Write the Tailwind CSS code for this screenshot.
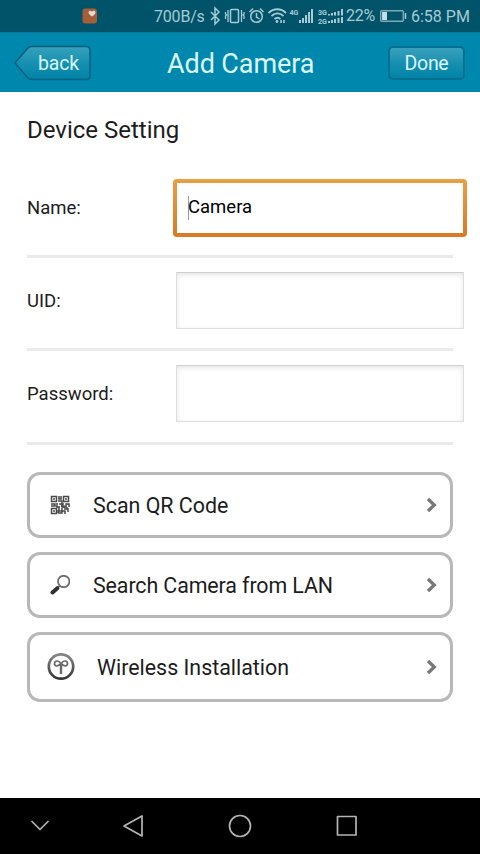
<!DOCTYPE html>
<html lang="en">
<head>
<meta charset="utf-8">
<title>Add Camera</title>
<script src="https://cdn.jsdelivr.net/npm/@tailwindcss/browser@4"></script>
</head>
<body class="w-[480px] h-[854px] overflow-hidden bg-white text-[#1c1c1c] font-[Roboto,sans-serif] flex flex-col">
<div class="h-8 shrink-0 bg-[#005369] text-[#a5cbd5] flex items-center text-[16px] leading-8 whitespace-nowrap">
  <svg class="ml-[82px] w-4 h-4 shrink-0" viewBox="0 0 16 16"><rect x=".5" y=".5" width="14.5" height="15" rx="3" fill="#a45f38"/><path d="M10 8.500C8 7 6.500 6 6.500 4.500c0-2 2.500-2.300 3.500-.7 1-1.600 3.500-1.300 3.500.7 0 1.500-1.500 2.500-3.500 4z" fill="#ead9d2"/></svg>
  <span class="ml-[56px] w-[55px] shrink-0 pt-px tracking-[-.2px]">700B/s</span>
  <svg class="w-[136px] h-8 shrink-0" viewBox="209 0 136 32" fill="none" stroke="#a5cbd5" stroke-width="1.500">
    <path d="M211 12l8 8-4 4V8l4 4-8 8"/>
    <rect x="230.500" y="9.500" width="8" height="13" rx="1"/><path d="M228 10v12M241.500 10v12M225.500 12v2l1 1-1 1v3M244 12v2l-1 1 1 1v3" stroke-width="1.300"/>
    <circle cx="256.500" cy="16.500" r="5.800"/><path d="M256.500 13v4l3 2M249.500 12l3.500-3.500M263.500 12l-3.500-3.500"/>
    <path d="M268.500 13c5-5 12.500-5 17.500 0M271.500 16c3.500-3.500 8.500-3.500 12 0M274.500 19c2-1.700 4-1.700 6 0" stroke-width="1.800"/><circle cx="277" cy="21.500" r="1.400" fill="#a5cbd5" stroke="none"/><path d="M281 20v3M284 20v3" stroke-width="1.600"/>
    <path d="M300 20v3M303 18v5M306 15v8M309 12v11M312 9v14" stroke-width="2"/>
    <path d="M329 14v1.500M332 13v2.500M335 12v3.500M338.500 11v4.500M342 9v6.500M329 21v2M332 20v3M335 19v4M338.500 18v5M342 17v6" stroke-width="2"/>
    <g fill="#a5cbd5" stroke="none" font-family="Roboto, sans-serif" font-weight="700" font-size="7"><text x="289.500" y="15" font-size="8" textLength="9" lengthAdjust="spacingAndGlyphs">4G</text><text x="318" y="14.500" textLength="9" lengthAdjust="spacingAndGlyphs">3G</text><text x="318" y="24" textLength="9" lengthAdjust="spacingAndGlyphs">2G</text></g>
  </svg>
  <span class="ml-[1px] w-[33px] shrink-0 text-[16px] tracking-[-.3px]">22%</span>
  <svg class="w-7 h-4 shrink-0" viewBox="0 0 28 16"><rect x="1.700" y="2.700" width="22.600" height="10.600" rx="1" fill="none" stroke="#7eacb8" stroke-width="1.400"/><path d="M3 4h5v8H3z" fill="#c1dfe5"/><path d="M26.500 5v6" stroke="#a5cbd5" stroke-width="1.500"/></svg>
  <span class="ml-[4px] pt-px">6:58 PM</span>
</div>
<header class="h-[60px] shrink-0 bg-[#0087ad] border-t border-[#08799b] flex items-center text-[#d9f7fc]">
  <button class="relative ml-[14px] w-[77px] h-[36px] flex items-center justify-center pl-3 mt-px">
    <svg class="absolute inset-0 w-[77px] h-[36px]" viewBox="0 0 77 36"><defs><linearGradient id="b" x2="0" y2="1"><stop stop-color="#38a1bc"/><stop offset=".5" stop-color="#1790b1"/><stop offset="1" stop-color="#0083a7"/></linearGradient></defs><path d="M1 18L13.500 3.500Q15 1.500 18 1.500h54q4 0 4 4v25q0 4-4 4H18q-3 0-4.500-2z" fill="url(#b)" stroke="#04617f" stroke-width="1.500"/></svg>
    <span class="relative text-[19.500px] leading-none tracking-[-.2px] pt-px">back</span>
  </button>
  <h1 class="ml-[76px] w-[150px] text-[27px] tracking-[-.1px] leading-none whitespace-nowrap mt-[3px]">Add Camera</h1>
  <button class="ml-[71px] mt-px w-[77px] h-[34px] rounded-[5px] border-2 border-[#04708f] bg-linear-to-b from-[#38a1bc] via-[#1790b1] to-[#0083a7] text-[19.500px] tracking-[-.3px] leading-none pt-px">Done</button>
</header>
<main class="flex-1 flex flex-col pl-[27px] pr-[13px]">
  <h2 class="h-[75px] flex items-center text-[24px]">Device Setting</h2>
  <div class="h-[82px] flex items-center">
    <label class="w-[146px] text-[18.500px] mt-px">Name:</label>
    <div class="w-[294px] h-[58px] -mt-px rounded-[4px] bg-linear-to-b from-[#e8a043] to-[#d97a25] p-[4px]"><div class="h-full bg-white pl-[11px] flex items-center text-[18.500px] text-black"><span class="w-px h-6 bg-[#8aa0a8] -mr-px"></span><span class="pt-px">Camera</span></div></div>
  </div>
  <div class="mt-[6px] h-[3px] w-[426px] bg-[#ebebeb]"></div>
  <div class="h-[90px] flex items-center pb-[6px]">
    <label class="w-[149px] text-[18.500px] pt-[3px]">UID:</label>
    <div class="w-[288px] h-[57px] border border-[#dedede] border-t-[#cfcfcf] shadow-[inset_0_2px_5px_#e5e5e5]"></div>
  </div>
  <div class="h-[3px] w-[426px] bg-[#ebebeb]"></div>
  <div class="h-[91px] flex items-center pb-[6px]">
    <label class="w-[149px] text-[18.500px] pt-[3px]">Password:</label>
    <div class="w-[288px] h-[57px] border border-[#dedede] border-t-[#cfcfcf] shadow-[inset_0_2px_5px_#e5e5e5]"></div>
  </div>
  <div class="h-[3px] w-[426px] bg-[#ebebeb]"></div>
  <div class="mt-[27px] w-[426px] flex flex-col gap-[14px] text-[21.400px]">
    <button class="h-[66px] border-3 border-[#b8b8b8] rounded-[13px] flex items-center text-left">
      <svg class="ml-[20px] w-5 h-5" viewBox="0 0 20 20" fill="none" stroke="#484848" stroke-width="1.500"><path d="M1.500 1.500h5v5h-5zM13.500 1.500h5v5h-5zM1.500 13.500h5v5h-5z"/><path d="M3 4h2M15 4h2M3 16h2M9 1v3h2V1M8 6h4v3M1 9h4v2H1M7 8v4h3M9 9h5M12 8v4h4V9h3v3M6 12h3v4h3v-3M8 18h4v-2h3v3M14 14h4v3M11 11h3v2M17 12v2M8 15v3"/></svg>
      <span class="ml-[23px] flex-1 pt-[2px]">Scan QR Code</span>
      <svg class="mr-[10px] w-4 h-4" viewBox="0 0 16 16" fill="none" stroke="#787878" stroke-width="3.300"><path d="M4 2l6.300 6L4 14"/></svg>
    </button>
    <button class="h-[66px] border-3 border-[#b8b8b8] rounded-[13px] flex items-center text-left">
      <svg class="ml-[20px] w-5 h-5" viewBox="0 0 20 20" fill="none"><circle cx="13.700" cy="6.500" r="5.700" stroke="#686868" stroke-width="1.700"/><path d="M9.500 11l-2 2" stroke="#686868" stroke-width="1.500"/><path d="M7.300 13.200L2.500 17.500" stroke="#303030" stroke-width="4" stroke-linecap="round"/></svg>
      <span class="ml-[23px] flex-1 pt-[2px] tracking-[-.1px]">Search Camera from LAN</span>
      <svg class="mr-[10px] w-4 h-4" viewBox="0 0 16 16" fill="none" stroke="#787878" stroke-width="3.300"><path d="M4 2l6.300 6L4 14"/></svg>
    </button>
    <button class="h-[70px] border-3 border-[#b8b8b8] rounded-[13px] flex items-center text-left">
      <svg class="ml-[17px] w-7 h-7" viewBox="0 0 28 28" fill="none"><defs><linearGradient id="w" gradientUnits="userSpaceOnUse" x1="0" y1="1" x2="0" y2="27"><stop stop-color="#888"/><stop offset="1" stop-color="#303030"/></linearGradient></defs><circle cx="14" cy="13.500" r="12.200" stroke="url(#w)" stroke-width="2.700"/><path d="M14 14.500C14 10 12 8 10 8c-3 0-3.500 4.700-.5 5 2 .2 3-1.800 4.500-1.800s2.500 2 4.500 1.800c3-.3 2.500-5-.5-5-2 0-4 2-4 6.500z" stroke="#686868" stroke-width="1.700"/><path d="M14 11.500V21" stroke="#686868" stroke-width="2.400"/></svg>
      <span class="ml-[22px] flex-1 pt-[2px]">Wireless Installation</span>
      <svg class="mr-[10px] w-4 h-4" viewBox="0 0 16 16" fill="none" stroke="#787878" stroke-width="3.300"><path d="M4 2l6.300 6L4 14"/></svg>
    </button>
  </div>
</main>
<nav class="h-14 shrink-0 bg-black">
  <svg class="w-[480px] h-14" viewBox="0 0 480 56" fill="none" stroke="#b5b5b5" stroke-width="1.700" stroke-linejoin="round" stroke-linecap="round"><path d="M32 23.500l8 8 8-8M142 18v20l-18-10z"/><circle cx="240" cy="28" r="10.500"/><rect x="337.500" y="18.500" width="18.500" height="18.500"/></svg>
</nav>
</body>
</html>
